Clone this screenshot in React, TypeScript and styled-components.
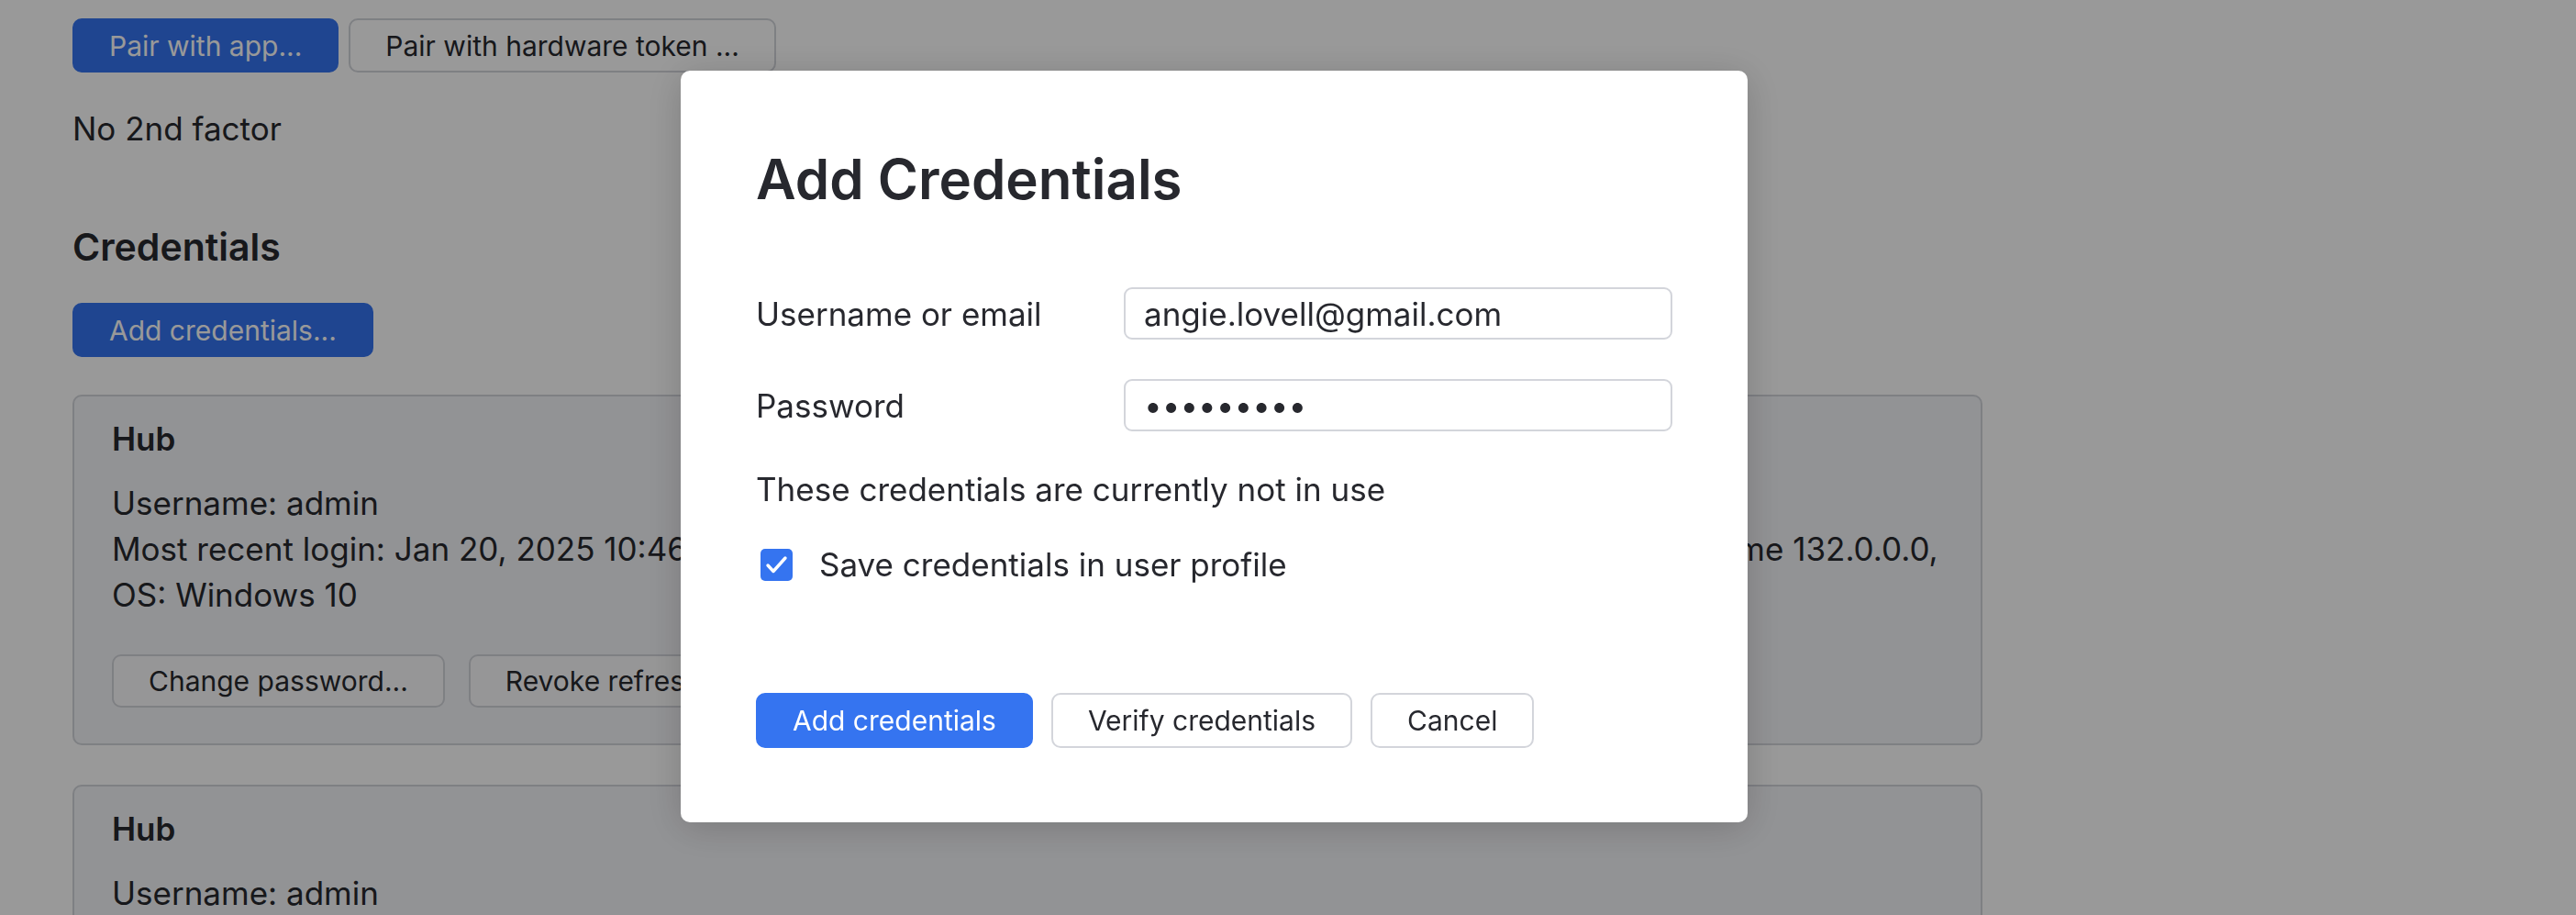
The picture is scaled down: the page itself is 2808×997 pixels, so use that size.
import { createGlobalStyle } from "styled-components";
import styled from "styled-components";

const GlobalStyle = createGlobalStyle`
  html, body {
    margin: 0;
    padding: 0;
    background: #ffffff;
    overflow: hidden;
  }
  body {
    font-family: Inter, "Noto Sans", sans-serif;
    font-size: 35px;
    line-height: 50px;
    color: #27282e;
  }
  * {
    box-sizing: border-box;
  }
`;

type Session = {
  service: string;
  username: string;
  login: string;
  os: string;
};

const sessions: Session[] = [
  {
    service: "Hub",
    username: "admin",
    login:
      "Jan 20, 2025 10:46:21 AM from 172.18.0.1, IP: 172.18.0.1, Location: Bremen, Browser: Chrome 132.0.0.0,",
    os: "Windows 10",
  },
  {
    service: "Hub",
    username: "admin",
    login:
      "Jan 20, 2025 10:41:08 AM from 172.18.0.1, IP: 172.18.0.1, Location: Bremen, Browser: Chrome 132.0.0.0,",
    os: "Windows 10",
  },
];

export default function App() {
  return (
    <>
      <GlobalStyle />
      <Page>
        <ButtonRow>
          <Button primary>Pair with app...</Button>
          <Button>Pair with hardware token ...</Button>
        </ButtonRow>
        <Text>No 2nd factor</Text>

        <SectionTitle>Credentials</SectionTitle>
        <ButtonRow>
          <Button primary>Add credentials...</Button>
        </ButtonRow>

        <CardList>
          {sessions.map((s, i) => (
            <Card key={i}>
              <CardTitle>{s.service}</CardTitle>
              <CardBody>
                <div>Username: {s.username}</div>
                <div>
                  Most recent login: {s.login} OS: {s.os}
                </div>
              </CardBody>
              <CardActions>
                <Button soft>Change password...</Button>
                <Button soft>Revoke refresh tokens</Button>
              </CardActions>
            </Card>
          ))}
        </CardList>
      </Page>

      <Overlay>
        <Dialog>
          <DialogTitle>Add Credentials</DialogTitle>
          <Form>
            <Label>Username or email</Label>
            <Input type="text" defaultValue="angie.lovell@gmail.com" />
            <Label>Password</Label>
            <Input type="password" defaultValue="secret123" />
          </Form>
          <Note>These credentials are currently not in use</Note>
          <CheckRow>
            <CheckBox>
              <svg width="35" height="35" viewBox="0 0 35 35">
                <polyline
                  points="8,18 14,24.5 27,10"
                  fill="none"
                  stroke="#ffffff"
                  strokeWidth="3.4"
                  strokeLinecap="round"
                  strokeLinejoin="round"
                />
              </svg>
            </CheckBox>
            <span>Save credentials in user profile</span>
          </CheckRow>
          <DialogActions>
            <Button primary>Add credentials</Button>
            <Button>Verify credentials</Button>
            <Button>Cancel</Button>
          </DialogActions>
        </Dialog>
      </Overlay>
    </>
  );
}

const Page = styled.div`
  width: 2161px;
  padding: 20px 0 0 79px;
  display: flex;
  flex-direction: column;
`;

const ButtonRow = styled.div`
  display: flex;
  gap: 11px;
`;

const Button = styled.button<{ primary?: boolean; soft?: boolean }>`
  height: 59px;
  padding: 0 38px;
  font-family: inherit;
  font-size: 30px;
  line-height: 40px;
  border-radius: 10px;
  cursor: pointer;
  border: 2px solid ${(p) => (p.primary ? "#3574f0" : "#d3d5db")};
  background: ${(p) => (p.primary ? "#3574f0" : p.soft ? "#fbfbfc" : "#ffffff")};
  color: ${(p) => (p.primary ? "#ffffff" : "#27282e")};
  white-space: nowrap;
`;

const Text = styled.div`
  margin-top: 36px;
`;

const SectionTitle = styled.h2`
  margin: 79px 0 36px;
  font-size: 41px;
  line-height: 50px;
  font-weight: 600;
`;

const CardList = styled.div`
  margin-top: 41px;
  display: flex;
  flex-direction: column;
  gap: 43px;
`;

const Card = styled.div`
  border: 2px solid #d3d5db;
  border-radius: 10px;
  background: #f4f5f8;
  padding: 21px 41px 39px;
`;

const CardTitle = styled.div`
  font-weight: 600;
`;

const CardBody = styled.div`
  margin-top: 20px;
`;

const CardActions = styled.div`
  margin-top: 40px;
  display: flex;
  gap: 26px;

  & > button {
    height: 58px;
  }
`;

const Overlay = styled.div`
  position: fixed;
  inset: 0;
  background: rgba(0, 0, 0, 0.4);
  display: flex;
  align-items: flex-start;
  padding: 77px 0 0 742px;
`;

const Dialog = styled.div`
  width: 1163px;
  height: 819px;
  background: #ffffff;
  border-radius: 10px;
  padding: 83px 82px 0;
  box-shadow: 0 6px 40px rgba(0, 0, 0, 0.18);
  display: flex;
  flex-direction: column;
`;

const DialogTitle = styled.h1`
  margin: 0;
  font-size: 60px;
  line-height: 70px;
  font-weight: 600;
`;

const Form = styled.div`
  margin-top: 83px;
  display: grid;
  grid-template-columns: 401px 1fr;
  row-gap: 43px;
  align-items: center;
`;

const Label = styled.label`
  color: #27282e;
`;

const Input = styled.input`
  height: 57px;
  width: 100%;
  border: 2px solid #d3d5db;
  border-radius: 9px;
  padding: 0 20px;
  font-family: inherit;
  font-size: 35px;
  color: #27282e;
  outline: none;
`;

const Note = styled.div`
  margin-top: 38px;
`;

const CheckRow = styled.div`
  margin-top: 32px;
  display: flex;
  align-items: center;
  gap: 29px;
  padding-left: 5px;
`;

const CheckBox = styled.span`
  width: 35px;
  height: 35px;
  border-radius: 5px;
  background: #3574f0;
  display: inline-flex;
`;

const DialogActions = styled.div`
  margin-top: 115px;
  display: flex;
  gap: 20px;

  & > button {
    height: 60px;
    padding: 0 38px;
  }
`;
